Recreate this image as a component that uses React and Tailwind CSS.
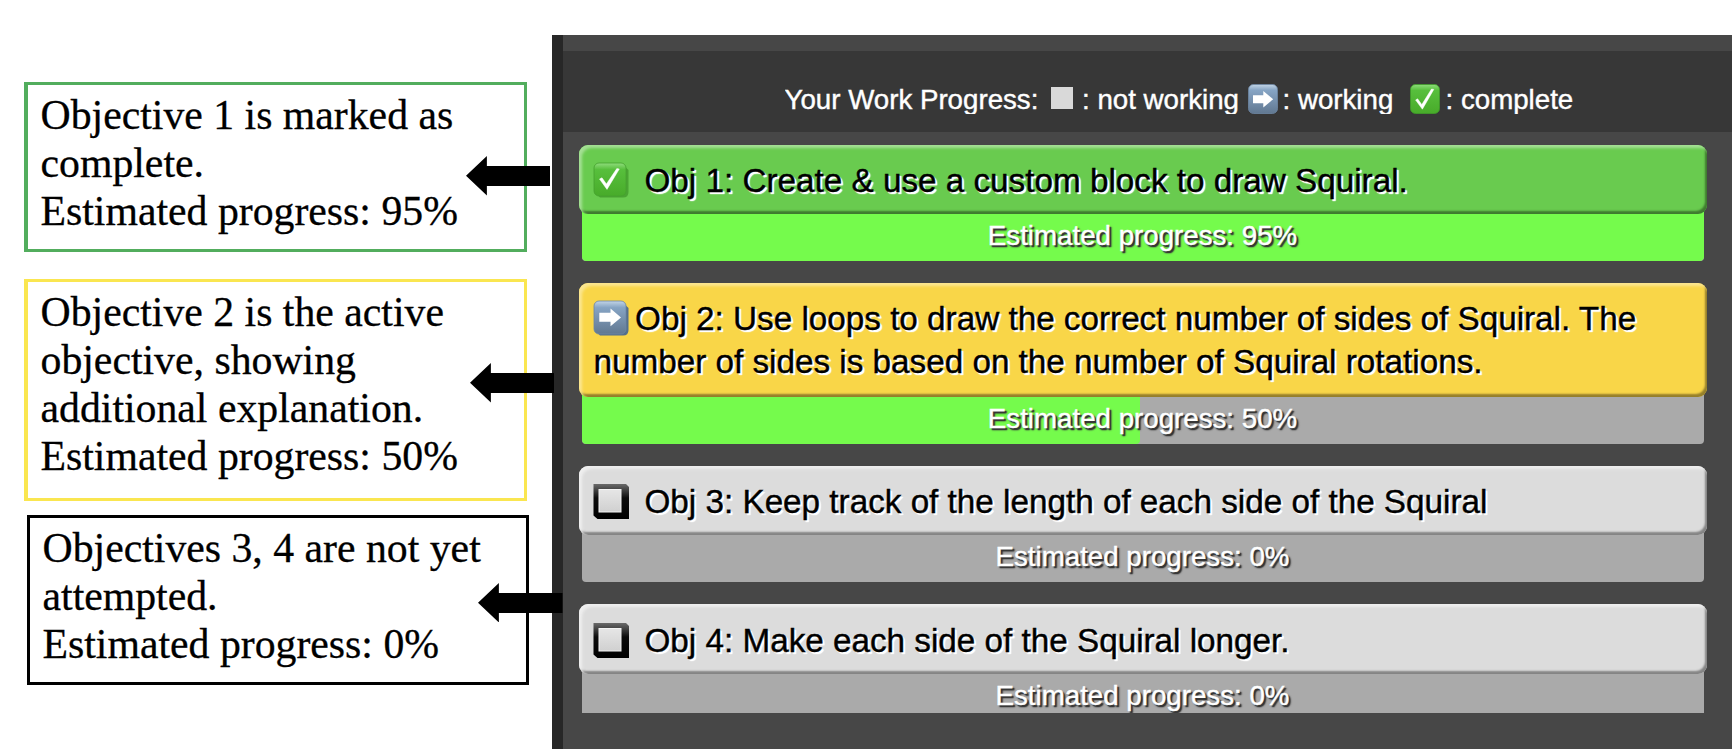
import React from "react";

const serif = "font-['Liberation_Serif',serif]";
const sans = "font-['Liberation_Sans',sans-serif]";

function CheckIcon({ className }) {
  return (
    <svg viewBox="0 0 30 30" className={className}>
      <defs>
        <linearGradient id="check-face" x1="0" y1="0" x2="0" y2="1">
          <stop offset="0" stopColor="#8fdc7c" />
          <stop offset="0.2" stopColor="#57bf3c" />
          <stop offset="1" stopColor="#48ab2a" />
        </linearGradient>
      </defs>
      <rect x="0.5" y="0.5" width="29" height="29" rx="5" fill="url(#check-face)" stroke="#3f9c2a" strokeWidth="0.8" />
      <path d="M5.6 16 L7.6 14.8 L11.8 20.6 L21.5 5 L23.8 5.4 L12.4 25.2 Z" fill="#fff" stroke="#fff" strokeWidth="0.5" />
    </svg>
  );
}

function ArrowIcon({ className }) {
  return (
    <svg viewBox="0 0 30 30" className={className}>
      <defs>
        <linearGradient id="arrow-face" x1="0" y1="0" x2="0" y2="1">
          <stop offset="0" stopColor="#c3d5e6" />
          <stop offset="0.2" stopColor="#86a4c4" />
          <stop offset="1" stopColor="#617891" />
        </linearGradient>
      </defs>
      <rect x="0.5" y="0.5" width="29" height="29" rx="5" fill="url(#arrow-face)" stroke="#6d87a3" strokeWidth="0.8" />
      <path d="M5 11.2 H15.3 V7 L25.2 15.2 L15.3 23.4 V19.2 H5 Z" fill="#fff" />
    </svg>
  );
}

function CheckTile() {
  return (
    <svg viewBox="0 0 37 37" className="h-[37px] w-[37px]">
      <path d="M6 2 H29 L35.5 8 V30 Q35.5 35.5 30 35.5 H7 L1.5 30 V6 Q1.5 2 6 2 Z" fill="#4aa433" />
      <rect x="1" y="1" width="32" height="33" rx="5" fill="url(#check-face)" stroke="#44a12d" strokeWidth="0.8" />
      <path d="M6.5 17 L9 15.8 L13.4 22 L23.8 6.6 L26.3 7 L14 27.4 Z" fill="#fff" stroke="#fff" strokeWidth="0.5" />
    </svg>
  );
}

function ArrowTile() {
  return (
    <svg viewBox="0 0 37 37" className="h-[37px] w-[37px]">
      <path d="M6 2 H29 L35.5 8 V30 Q35.5 35.5 30 35.5 H7 L1.5 30 V6 Q1.5 2 6 2 Z" fill="#546f8c" />
      <rect x="1" y="1" width="32" height="33" rx="5" fill="url(#arrow-face)" stroke="#6d87a3" strokeWidth="0.8" />
      <path d="M6.3 12.8 H17.5 V8.4 L28 17.5 L17.5 26.2 V21.8 H6.3 Z" fill="#fff" />
    </svg>
  );
}

function EmptyTile() {
  return (
    <svg viewBox="0 0 37 37" className="h-[37px] w-[37px]">
      <defs>
        <linearGradient id="frame" x1="0" y1="0" x2="0" y2="1">
          <stop offset="0" stopColor="#6a6a6a" />
          <stop offset="0.4" stopColor="#0c0c0c" />
          <stop offset="1" stopColor="#000" />
        </linearGradient>
        <linearGradient id="frame-inner" x1="0" y1="0" x2="0" y2="1">
          <stop offset="0" stopColor="#e6e6e6" />
          <stop offset="1" stopColor="#d0d0d0" />
        </linearGradient>
      </defs>
      <path d="M0.5 1 H33 L36 4 V36 H4.5 L0.5 32.5 Z" fill="url(#frame)" />
      <rect x="6" y="6.5" width="22" height="22.5" fill="url(#frame-inner)" stroke="#f4f4f4" strokeWidth="1" />
    </svg>
  );
}

function Pointer({ className }) {
  return (
    <svg viewBox="0 0 85 40" preserveAspectRatio="none" className={"absolute h-[39.5px] " + className}>
      <path d="M0 20 L21 0 V10 H85 V30.5 H21 V40 Z" fill="#000" />
    </svg>
  );
}

function Note({ lines, className }) {
  return (
    <div className={"whitespace-nowrap pl-[12.5px] text-[41.75px] leading-[48px] text-black [-webkit-text-stroke:0.3px_#000] " + serif + " " + className}>
      {lines.map((line) => (
        <div key={line}>{line}</div>
      ))}
    </div>
  );
}

const bevels = {
  green:
    "bg-[#69cb4f] shadow-[inset_3px_3px_3px_#a5e095,inset_-2px_-3px_2px_#3f7a2f]",
  yellow:
    "bg-[#f9d648] shadow-[inset_3px_3px_3px_#fbe691,inset_-2px_-3px_2px_#957f2b]",
  grey:
    "bg-[#dcdcdc] shadow-[inset_3px_3px_3px_#efefef,inset_-2px_-3px_2px_#848484]",
};

function Objective({ tone, tile, lines, gap, progress, fill, cardHeight, barClass }) {
  return (
    <div className="flex flex-col">
      <div className={"relative z-10 rounded-[9px] pl-[14.5px] pt-[14.5px] " + cardHeight + " " + bevels[tone]}>
        {lines.map((line, i) => (
          <div
            key={line}
            className="flex h-[43px] whitespace-nowrap text-[33.25px] leading-[43px] text-black [-webkit-text-stroke:0.4px_#000] [text-shadow:2px_2px_1px_#fff,2px_2px_1px_#fff]"
          >
            {i === 0 && <span className={"-ml-px shrink-0 pt-[3px] " + gap}>{tile}</span>}
            <span>{line}</span>
          </div>
        ))}
      </div>
      <div className={"ml-[3px] mr-[2.5px] -mt-[10px] grid overflow-hidden bg-[#aaaaaa] " + barClass}>
        <div className="col-start-1 row-start-1 rounded-b-[4px] bg-[#75fb4c]" style={{ width: fill + "%" }} />
        <div className="col-start-1 row-start-1 pr-[1px] pt-[16px] text-center text-[27.7px] leading-[32px] text-white [-webkit-text-stroke:0.4px_#fff] [text-shadow:2px_2px_1px_#333,2px_2px_2px_#444]">
          Estimated progress: {progress}%
        </div>
      </div>
    </div>
  );
}

export default function App() {
  return (
    <div className="relative flex h-[750px] w-[1734px] overflow-hidden bg-white">
      <div className="flex w-[552px] shrink-0 flex-col pl-[24px] pt-[82px]">
        <Note
          className="h-[169.5px] w-[503px] border-[3px] border-l-[4px] border-[#52ad5d] pt-[6px]"
          lines={["Objective 1 is marked as", "complete.", "Estimated progress: 95%"]}
        />
        <Note
          className="mt-[27.5px] h-[221.5px] w-[503px] border-[3px] border-l-[4px] border-[#fae650] pt-[6px]"
          lines={["Objective 2 is the active", "objective, showing", "additional explanation.", "Estimated progress: 50%"]}
        />
        <Note
          className="ml-[3px] mt-[14.5px] h-[169.5px] w-[502px] border-[3px] border-black pt-[6px]"
          lines={["Objectives 3, 4 are not yet", "attempted.", "Estimated progress: 0%"]}
        />
      </div>

      <div className={"mt-[34.5px] flex h-[714px] w-[1180px] border-l-[11px] border-[#272727] bg-[#474747] " + sans}>
        <div className="flex w-full flex-col pt-[16.5px]">
          <div className="h-[80.5px] bg-[#373737] pl-[221.5px] pt-[32.5px]">
            <div className="flex h-[30px] overflow-hidden whitespace-nowrap text-[27.7px] leading-[32px] text-white [-webkit-text-stroke:0.4px_#fff]">
              <span className="w-[266px]">Your Work Progress:</span>
              <span className="mt-[3px] h-[22px] w-[22px] bg-[#d9d9d9]" />
              <span className="ml-[9.5px] w-[165.5px]">: not working</span>
              <ArrowIcon className="h-[30px] w-[30px]" />
              <span className="ml-[5px] w-[127px]">: working</span>
              <CheckIcon className="h-[30px] w-[30px]" />
              <span className="ml-[6px]">: complete</span>
            </div>
          </div>
          <div className="ml-[16px] mt-[13.3px] flex w-[1127.5px] flex-col">
            <Objective
              tone="green"
              tile={<CheckTile />}
              gap="w-[52px]"
              lines={["Obj 1: Create & use a custom block to draw Squiral."]}
              progress={95}
              fill={100}
              cardHeight="h-[69.5px]"
              barClass="mb-[21.7px] h-[57px] rounded-b-[4px]"
            />
            <Objective
              tone="yellow"
              tile={<ArrowTile />}
              gap="w-[42.6px]"
              lines={[
                "Obj 2: Use loops to draw the correct number of sides of Squiral. The",
                "number of sides is based on the number of Squiral rotations.",
              ]}
              progress={50}
              fill={49.7}
              cardHeight="h-[113.8px]"
              barClass="mb-[21.8px] h-[57.4px] rounded-b-[4px]"
            />
            <Objective
              tone="grey"
              tile={<EmptyTile />}
              gap="w-[52px]"
              lines={["Obj 3: Keep track of the length of each side of the Squiral"]}
              progress={0}
              fill={0}
              cardHeight="h-[69.5px]"
              barClass="mb-[21.7px] h-[57px] rounded-b-[4px]"
            />
            <Objective
              tone="grey"
              tile={<EmptyTile />}
              gap="w-[52px]"
              lines={["Obj 4: Make each side of the Squiral longer."]}
              progress={0}
              fill={0}
              cardHeight="h-[69.5px]"
              barClass="h-[49.5px]"
            />
          </div>
        </div>
      </div>

      <Pointer className="left-[465.5px] top-[156px] w-[84.5px]" />
      <Pointer className="left-[469.5px] top-[363px] w-[84.5px]" />
      <Pointer className="left-[478px] top-[582.5px] w-[84.5px]" />
    </div>
  );
}
